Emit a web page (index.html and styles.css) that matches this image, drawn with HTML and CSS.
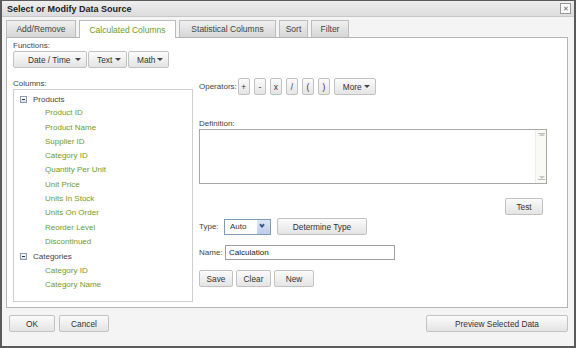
FILE: index.html
```html
<!DOCTYPE html>
<html lang="en">
<head>
  <meta charset="UTF-8" />
  <title>Select or Modify Data Source</title>
  <link rel="stylesheet" href="styles.css">
</head>
<body>
  <div class="dialog">
    <div class="titlebar">
      <span>Select or Modify Data Source</span>
      <span class="close">&#x2715;</span>
    </div>

    <!-- tabs -->
    <div class="tabs">
      <div class="tab">Add/Remove</div>
      <div class="tab active">Calculated Columns</div>
      <div class="tab">Statistical Columns</div>
      <div class="tab">Sort</div>
      <div class="tab">Filter</div>
    </div>

    <div class="panel">
      <div class="left">
        <div class="lbl">Functions:</div>
        <div class="btn-row joined">
          <button class="btn dd w-date">Date / Time <i class="caret"></i></button>
          <button class="btn dd w-text">Text <i class="caret"></i></button>
          <button class="btn dd w-math">Math <i class="caret"></i></button>
        </div>
        <div class="lbl cols-lbl">Columns:</div>
        <div class="tree">
          <div class="node"><span class="minus"></span>Products</div>
          <ul class="leaves">
            <li>Product ID</li>
            <li>Product Name</li>
            <li>Supplier ID</li>
            <li>Category ID</li>
            <li>Quantity Per Unit</li>
            <li>Unit Price</li>
            <li>Units In Stock</li>
            <li>Units On Order</li>
            <li>Reorder Level</li>
            <li>Discontinued</li>
          </ul>
          <div class="node"><span class="minus"></span>Categories</div>
          <ul class="leaves">
            <li>Category ID</li>
            <li>Category Name</li>
          </ul>
        </div>
      </div>

      <div class="right">
        <div class="ops">
          <span class="lbl">Operators:</span>
          <button class="btn op">+</button>
          <button class="btn op">-</button>
          <button class="btn op">x</button>
          <button class="btn op">/</button>
          <button class="btn op">(</button>
          <button class="btn op">)</button>
          <button class="btn dd more">More <i class="caret"></i></button>
        </div>
        <div class="lbl def-lbl">Definition:</div>
        <div class="textarea">
          <div class="vscroll"><span class="up"></span><span class="down"></span></div>
        </div>
        <div class="test-row"><button class="btn test">Test</button></div>
        <div class="field type-row">
          <span class="lbl">Type:</span>
          <div class="select">Auto<span class="sel-arrow"></span></div>
          <button class="btn determine">Determine Type</button>
        </div>
        <div class="field name-row">
          <span class="lbl">Name:</span>
          <div class="input">Calculation</div>
        </div>
        <div class="btn-row actions">
          <button class="btn save">Save</button>
          <button class="btn clear">Clear</button>
          <button class="btn new">New</button>
        </div>
      </div>
    </div>

    <div class="footer">
      <button class="btn ok">OK</button>
      <button class="btn cancel">Cancel</button>
      <button class="btn preview">Preview Selected Data</button>
    </div>
  </div>
</body>
</html>
```

FILE: styles.css
```css
/* ===== base ===== */
*,*::before,*::after{box-sizing:border-box;margin:0;padding:0;}
body{font-family:"Liberation Sans",Arial,sans-serif;font-size:8px;color:#333;background:#fff;}
ul{list-style:none;}

/* ===== dialog shell ===== */
.dialog{width:576px;height:348px;border:2px solid #5a5a5a;border-top-width:1px;background:#f4f4f4;display:flex;flex-direction:column;}
.titlebar{height:16px;display:flex;align-items:center;justify-content:space-between;padding:0 3px 0 5px;background:linear-gradient(#eeeeee,#dcdcdc);border-bottom:1px solid #c8c8c8;font-size:9px;font-weight:bold;color:#222;}
.close{width:11px;height:11px;border:1px solid #999;background:#fafafa;font-size:7px;line-height:9px;text-align:center;color:#666;font-weight:normal;}

/* ===== tabs ===== */
.tabs{display:flex;gap:3px;padding:3px 0 0 4px;height:20px;font-size:8.5px;}
.tab{height:17px;display:flex;align-items:center;justify-content:center;white-space:nowrap;background:linear-gradient(#f0f0f0,#d6d6d6);border:1px solid #bdbdbd;border-bottom:none;color:#444;}
.tab:nth-child(1){width:70px;}
.tab:nth-child(3){width:97px;}
.tab:nth-child(4){width:29px;}
.tab:nth-child(5){width:38px;}
.tab.active{background:#fff;color:#6e9c2a;height:18px;margin-bottom:-1px;width:97px;position:relative;z-index:1;border-color:#bbb;}

/* ===== panel ===== */
.panel{margin:0 6px 0 4px;height:271px;border:1px solid #b4b4b4;background:#fff;display:flex;padding:3px 0 0 6px;gap:6px;}
.left{width:180px;display:flex;flex-direction:column;}
.right{width:348px;padding-top:37px;display:flex;flex-direction:column;}
.lbl{color:#444;line-height:9px;white-space:nowrap;}
.cols-lbl{margin-top:11px;margin-bottom:1px;}

/* ===== buttons ===== */
.btn{font:inherit;font-size:8.3px;color:#333;height:17px;white-space:nowrap;border:1px solid #c2c2c2;border-radius:2px;background:linear-gradient(#fbfbfb,#e4e4e4);display:inline-flex;align-items:center;justify-content:center;}
.btn-row{display:flex;}
.joined{margin-top:1px;gap:1px;}
.dd{justify-content:space-between;padding:0 5px 0 9px;}
.caret{width:0;height:0;border-left:3px solid transparent;border-right:3px solid transparent;border-top:3px solid #444;}
.w-date{width:74px;padding-left:14px;}
.w-text{width:39px;padding-left:8px;}
.w-math{width:41px;padding-left:8px;}

/* ===== tree ===== */
.tree{width:180px;height:213px;border:1px solid #cfcfcf;padding:2px 0 0 6px;}
.node{height:14.3px;display:flex;align-items:center;color:#444;}
.minus{width:7px;height:7px;border:1px solid #8a9ab0;background:linear-gradient(#fff,#d8dde6);margin-right:6px;position:relative;}
.minus::after{content:"";position:absolute;left:1px;right:1px;top:2px;height:1px;background:#334;}
.leaves li{height:14.3px;line-height:14.3px;padding-left:25px;color:#6e9c2a;}

/* ===== right column ===== */
.ops{display:flex;align-items:center;gap:4px;height:17px;}
.ops .lbl{margin-right:-3px;}
.op{width:12px;}
.more{width:42px;padding:0 5px 0 8px;}
.def-lbl{margin-top:24px;}
.textarea{margin-top:1px;width:348px;height:55px;border:1px solid #a8a8a8;background:#fff;display:flex;justify-content:flex-end;}
.vscroll{width:11px;background:#fafaf5;border-left:1px solid #eee;display:flex;flex-direction:column;justify-content:space-between;padding:3px 2px;}
.vscroll span{width:7px;height:4px;border:solid #bbb;border-width:1px 0 0 0;position:relative;}
.vscroll .up::before{content:"";position:absolute;left:1px;top:-1px;border-left:3px solid transparent;border-right:3px solid transparent;border-bottom:3px solid #c8c8c8;}
.vscroll .down{border-width:0 0 1px 0;}
.vscroll .down::before{content:"";position:absolute;left:1px;bottom:0;border-left:3px solid transparent;border-right:3px solid transparent;border-top:3px solid #c8c8c8;}
.test-row{display:flex;justify-content:flex-end;padding-right:4px;margin-top:14px;}
.test{width:38px;}
.field{display:flex;align-items:center;}
.type-row{margin-top:3px;}
.type-row .lbl{width:25px;}
.select{width:47px;height:16px;border:1px solid #7f9db9;background:#fff;display:flex;align-items:center;justify-content:space-between;padding-left:5px;}
.sel-arrow{width:13px;height:14px;background:linear-gradient(#dfe8f7,#bccbeb);position:relative;}
.sel-arrow::after{content:"";position:absolute;left:3px;top:3px;width:4px;height:4px;border:solid #3d5b8f;border-width:0 2px 2px 0;transform:rotate(45deg);}
.determine{width:90px;margin-left:6px;}
.name-row{margin-top:10px;}
.name-row .lbl{width:26px;}
.input{width:170px;height:15px;border:1px solid #a0a0a0;background:#fff;padding-left:3px;line-height:13px;color:#222;}
.actions{margin-top:10px;gap:3px;}
.save{width:34px;}
.clear{width:35px;}
.new{width:40px;}

/* ===== footer ===== */
.footer{display:flex;gap:4px;padding:7px 6px 0 7px;}
.ok{width:46px;}
.cancel{width:50px;}
.preview{width:142px;margin-left:auto;}
```
